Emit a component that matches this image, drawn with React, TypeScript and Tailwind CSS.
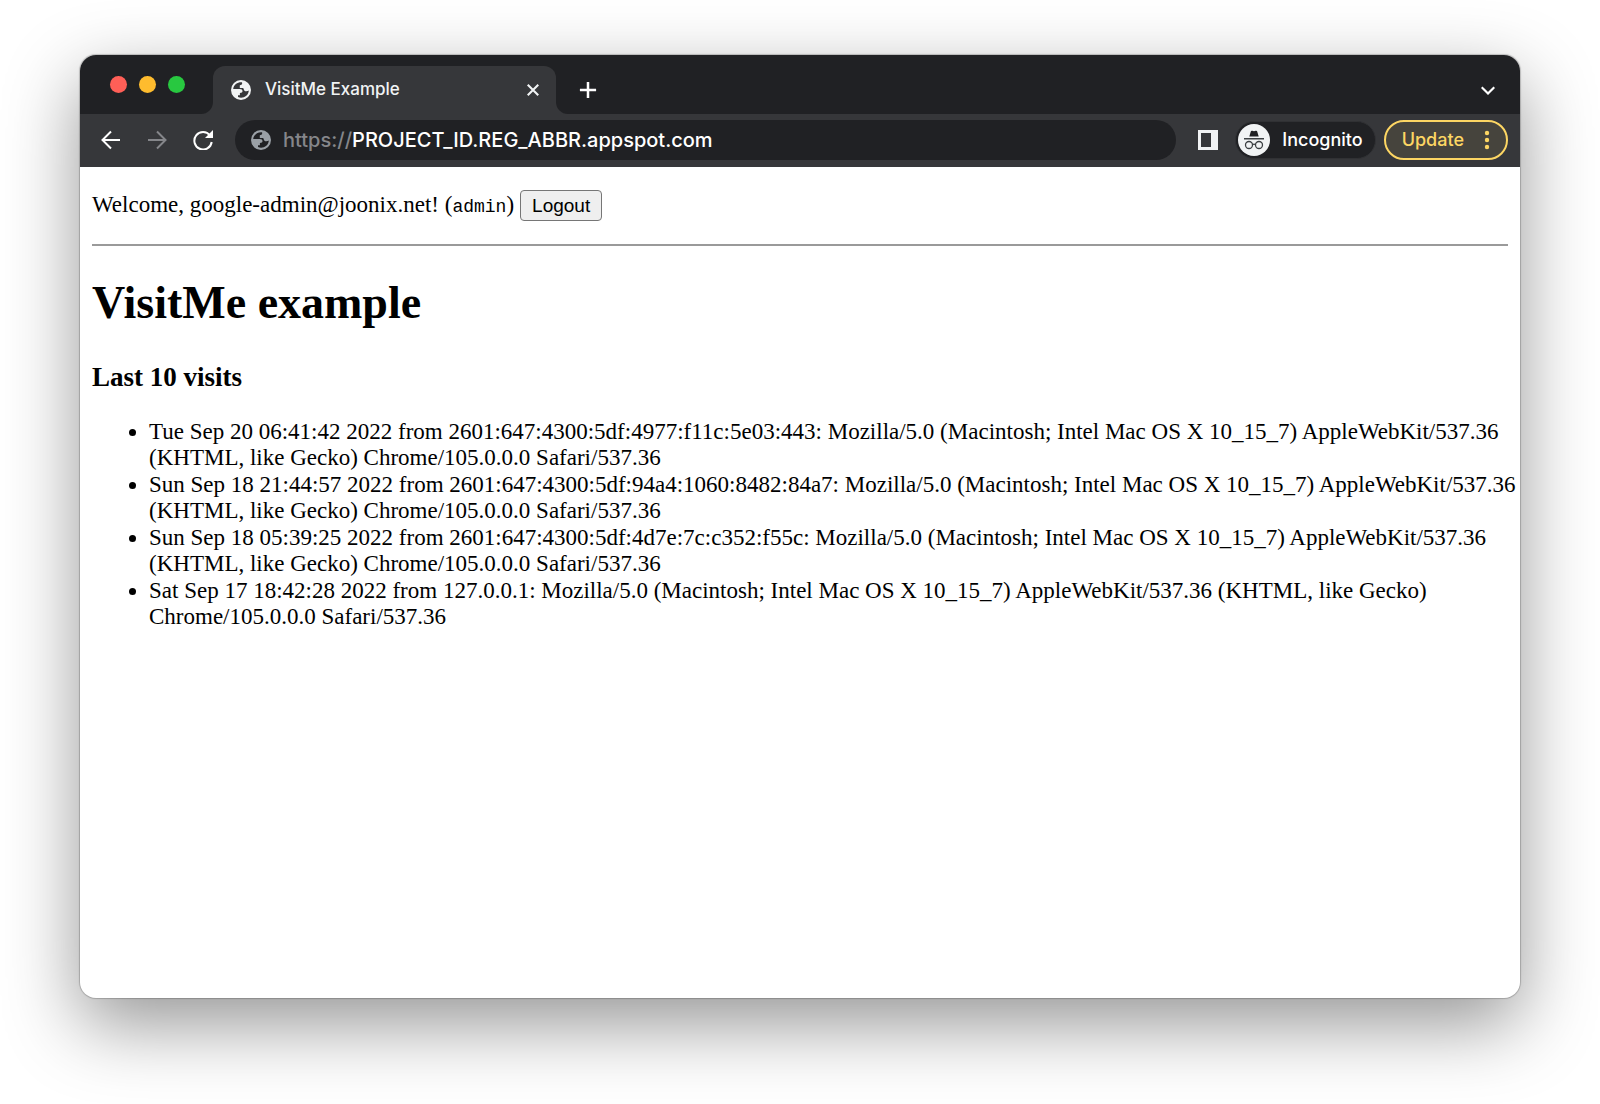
import type { SVGProps } from "react";

const visits = [
  "Tue Sep 20 06:41:42 2022 from 2601:647:4300:5df:4977:f11c:5e03:443: Mozilla/5.0 (Macintosh; Intel Mac OS X 10_15_7) AppleWebKit/537.36 (KHTML, like Gecko) Chrome/105.0.0.0 Safari/537.36",
  "Sun Sep 18 21:44:57 2022 from 2601:647:4300:5df:94a4:1060:8482:84a7: Mozilla/5.0 (Macintosh; Intel Mac OS X 10_15_7) AppleWebKit/537.36 (KHTML, like Gecko) Chrome/105.0.0.0 Safari/537.36",
  "Sun Sep 18 05:39:25 2022 from 2601:647:4300:5df:4d7e:7c:c352:f55c: Mozilla/5.0 (Macintosh; Intel Mac OS X 10_15_7) AppleWebKit/537.36 (KHTML, like Gecko) Chrome/105.0.0.0 Safari/537.36",
  "Sat Sep 17 18:42:28 2022 from 127.0.0.1: Mozilla/5.0 (Macintosh; Intel Mac OS X 10_15_7) AppleWebKit/537.36 (KHTML, like Gecko) Chrome/105.0.0.0 Safari/537.36",
];

function Stroke({ width, children, ...rest }: SVGProps<SVGSVGElement>) {
  return (
    <svg viewBox="0 0 20 20" width={width} height={width} fill="none" stroke="currentColor" strokeWidth="2" aria-hidden="true" {...rest}>
      {children}
    </svg>
  );
}

function Globe() {
  return (
    <svg viewBox="0 0 20 20" className="size-5 shrink-0" fill="currentColor" aria-hidden="true">
      <path
        fillRule="evenodd"
        d="M10 0a10 10 0 1 0 0 20a10 10 0 0 0 0-20zM11 2.200C7 1.700 2.600 4.500 2.200 9h6.300c2.300 0 3 .9 3 2.300c0 1.300-.9 1.700-2.600 1.700v2.200H7v1.900c5 2 10.500-1.300 10.800-6.600c-1.200.8-3.300 1-4.300.2c-1-.9-.5-2.700-1.800-2.700H8.800V5.200c1.700 0 2.900-1.200 2.200-3z"
      />
    </svg>
  );
}

function Incognito() {
  return (
    <svg viewBox="0 0 32 32" className="size-8 shrink-0" aria-hidden="true">
      <circle cx="16" cy="16" r="16" fill="#f1f3f4" />
      <path d="M11.300 12.500l1.500-5c.2-.7.8-.9 1.500-.7l1.700.5 1.700-.5c.7-.2 1.300 0 1.500.7l1.500 5z" fill="#202124" />
      <path d="M6 14h20v1.500H6z" fill="#3c4043" />
      <g fill="none" stroke="#3c4043" strokeWidth="1.300">
        <circle cx="11" cy="21" r="3.500" />
        <circle cx="21" cy="21" r="3.500" />
        <path d="M14.500 20.700q1.500-1 3 0" />
      </g>
    </svg>
  );
}

export default function App() {
  return (
    <div className="flex min-h-screen flex-col bg-white px-20 pt-[55px] pb-[106px]">
      <div className="flex flex-1 flex-col overflow-hidden rounded-2xl bg-white shadow-[0_0_1px_1px_rgba(0,0,0,0.2),0_26px_75px_rgba(0,0,0,0.42)]">
        <header className="bg-[#202124] font-['Inter',sans-serif] font-medium text-white">
          <div className="flex h-[59px] items-end">
            <div className="flex gap-3 self-center pl-[30px]">
              <button type="button" aria-label="Close window" className="size-[17px] rounded-full bg-[#ff5f57]" />
              <button type="button" aria-label="Minimize window" className="size-[17px] rounded-full bg-[#febc2e]" />
              <button type="button" aria-label="Zoom window" className="size-[17px] rounded-full bg-[#28c840]" />
            </div>
            <div className="ml-4 size-3 overflow-hidden bg-[#36373a]">
              <div className="size-full rounded-br-xl bg-[#202124]" />
            </div>
            <div className="flex h-12 w-[343px] items-center rounded-t-xl bg-[#36373a] pr-4 pl-[18px] text-[#f1f3f4]">
              <Globe />
              <span className="ml-3.5 flex-1 text-[17px]">VisitMe Example</span>
              <button type="button" aria-label="Close tab">
                <Stroke width={14} strokeWidth="3"><path d="M2.500 2.500l15 15M17.500 2.500l-15 15" /></Stroke>
              </button>
            </div>
            <div className="size-3 overflow-hidden bg-[#36373a]">
              <div className="size-full rounded-bl-xl bg-[#202124]" />
            </div>
            <button type="button" aria-label="New tab" className="mb-[15px] ml-[11px]">
              <Stroke width={18} strokeWidth="2.800"><path d="M10 1v18M1 10h18" /></Stroke>
            </button>
            <button type="button" aria-label="Search tabs" className="mr-[25px] mb-[17px] ml-auto">
              <Stroke width={14} strokeWidth="3.200"><path d="M1 6l9 9 9-9" /></Stroke>
            </button>
          </div>
          <div className="flex h-[53px] items-center bg-[#36373a] pr-3 pb-0.5 pl-5">
            <button type="button" aria-label="Back" className="mr-[26px] ml-px">
              <Stroke width={20}><path d="M19 10H2M10 1.500L1.500 10l8.500 8.500" /></Stroke>
            </button>
            <button type="button" aria-label="Forward" className="mr-[26px] text-[#85868a]">
              <Stroke width={20}><path d="M1 10h17M10 1.500l8.500 8.500-8.500 8.500" /></Stroke>
            </button>
            <button type="button" aria-label="Reload" className="mr-[22px]">
              <Stroke width={20}>
                <path d="M17 5.500A8.700 8.700 0 1 0 18.700 12" />
                <path d="M20 0v8h-8z" fill="currentColor" stroke="none" />
              </Stroke>
            </button>
            <div className="flex h-10 min-w-0 flex-1 items-center rounded-full bg-[#202124] px-4 text-[20px]">
              <span className="flex text-[#9aa0a6]"><Globe /></span>
              <label htmlFor="address" className="ml-3 text-[#85868a]">https://</label>
              <input id="address" defaultValue="PROJECT_ID.REG_ABBR.appspot.com" className="min-w-0 flex-1 bg-transparent text-white outline-none" />
            </div>
            <button type="button" aria-label="Side panel" className="ml-[22px]">
              <svg viewBox="0 0 20 20" className="size-5" fill="#f1f3f4" aria-hidden="true">
                <path fillRule="evenodd" d="M0 0h20v20H0zM3 3v14h10V3z" />
              </svg>
            </button>
            <button type="button" className="ml-[17px] flex h-[38px] items-center gap-3 rounded-full border border-[#303134] bg-[#202124] pr-3 pl-0.5 text-[18px]">
              <Incognito />
              Incognito
            </button>
            <button type="button" className="ml-2 flex h-10 items-center gap-5 rounded-full border-2 border-[#fdd663] bg-[#46443d] pr-4 pl-4 text-[18px] text-[#fdd663]">
              Update
              <svg viewBox="0 0 6 20" className="h-5 w-1.5" fill="currentColor" aria-hidden="true">
                <circle cx="3" cy="3" r="2.200" /><circle cx="3" cy="10" r="2.200" /><circle cx="3" cy="17" r="2.200" />
              </svg>
            </button>
          </div>
        </header>
        <main className="pt-[23px] pr-1 pb-6 pl-3 font-['Liberation_Serif',serif] text-[23px] leading-[26px] text-black">
          <div className="flex flex-wrap items-center gap-1.5">
            <p>
              Welcome, google-admin@joonix.net! (<code className="font-['Liberation_Mono',monospace] text-[18px]">admin</code>)
            </p>
            <button type="button" className="h-[31px] rounded-[4px] border border-[#767676] bg-[#efefef] px-[11px] font-['Liberation_Sans',sans-serif] text-[19px] leading-7">
              Logout
            </button>
          </div>
          <hr className="mt-[23px] mr-2 border-t-2 border-[#9a9a9a]" />
          <h1 className="mt-[30px] text-[46px] leading-[54px] font-bold">VisitMe example</h1>
          <h3 className="mt-[31px] text-[27px] leading-8 font-bold">Last 10 visits</h3>
          <ul className="mt-[26px] list-disc space-y-px pl-[57px]">
            {visits.map((visit) => (
              <li key={visit}>{visit}</li>
            ))}
          </ul>
        </main>
      </div>
    </div>
  );
}
